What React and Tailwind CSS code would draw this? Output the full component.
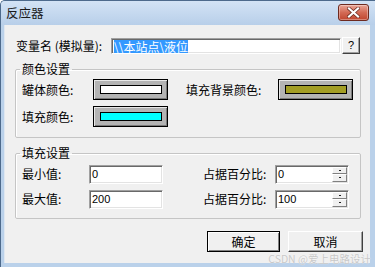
import React from "react";

function Raised({ className = "", children }) {
  return (
    <div
      className={
        "flex items-center justify-center border-t border-l border-white border-b border-r border-b-[#404040] border-r-[#404040] bg-[#f0f0f0] shadow-[inset_-1px_-1px_0_#a0a0a0] " +
        className
      }
    >
      {children}
    </div>
  );
}

function ColorBtn({ bar }) {
  return (
    <div className="w-[75px] h-[21px] border border-black bg-[#b4b4b4] shadow-[inset_1px_1px_0_#e8e8e8,inset_-1px_-1px_0_#7a7a7a] flex items-center justify-center">
      <div className={"w-[62px] h-[9px] border border-black " + bar} />
    </div>
  );
}

function Sunken({ className = "", children }) {
  return (
    <div
      className={
        "bg-white border-t border-l border-[#a0a0a0] border-b border-r border-b-white border-r-white shadow-[inset_1px_1px_0_#696969,inset_-1px_-1px_0_#e3e3e3] flex items-center " +
        className
      }
    >
      {children}
    </div>
  );
}

function Spin({ value }) {
  return (
    <Sunken className="w-[74px] h-[19px]">
      <span className="flex-1 pl-[2px] font-['Liberation_Sans',sans-serif] text-[11px] leading-none">
        {value}
      </span>
      <div className="w-[16px] h-full flex flex-col py-[1px] pr-[1px]">
        <div className="flex-1 flex items-center justify-center bg-[#f0f0f0] border-t border-l border-white border-b border-r border-b-[#808080] border-r-[#808080]">
          <div className="w-[2px] h-[1px] bg-[#202020]" />
        </div>
        <div className="flex-1 flex items-center justify-center bg-[#f0f0f0] border-t border-l border-white border-b border-r border-b-[#808080] border-r-[#808080]">
          <div className="w-[2px] h-[1px] bg-[#202020]" />
        </div>
      </div>
    </Sunken>
  );
}

export default function App() {
  return (
    <div className="relative w-[375px] h-[267px] overflow-hidden bg-[#bad1ea] flex flex-col border-l border-t border-[#4d6a8c] rounded-tl-[5px] font-['Noto_Sans_CJK_SC',sans-serif] text-[12px] text-black">
      {/* title bar */}
      <div className="h-[24px] flex items-start justify-between pl-[5px] pr-[6px] bg-gradient-to-b from-[#d3e3f5] to-[#b8cfe9]">
        <span className="mt-[5px] text-[12.5px] leading-[14px] text-[#1b1b1b]">反应器</span>
        <div className="mt-[3px] w-[31px] h-[17px] rounded-[3px] border border-[#6e2a1f] bg-gradient-to-b from-[#eaa597] via-[#d36a55] to-[#c0452e] shadow-[inset_0_0_0_1px_rgba(255,255,255,0.35)] flex items-center justify-center">
          <svg width="13" height="11" viewBox="0 0 13 11">
            <path d="M2 1.5 L11 9.5 M11 1.5 L2 9.5" stroke="#6a2a20" strokeWidth="3.6" strokeLinecap="square" />
            <path d="M2 1.5 L11 9.5 M11 1.5 L2 9.5" stroke="#ffffff" strokeWidth="2.2" strokeLinecap="square" />
          </svg>
        </div>
      </div>

      {/* frame + body */}
      <div className="flex-1 flex pl-[3px] pr-[5px] pb-[4px]">
        <div className="flex-1 bg-[#f0f0f0] flex flex-col border-l border-[#dfe7f0]">
          {/* row 1 */}
          <div className="mt-[12px] h-[17px] flex items-start pl-[11px]">
            <span className="w-[95px] leading-[17px] whitespace-nowrap">变量名 (模拟量):</span>
            <Sunken className="mt-[1px] w-[230px] h-[16px] pl-[2px]">
              <span className="bg-[#3399ff] text-white leading-[13px]">\\本站点\液位</span>
            </Sunken>
            <Raised className="ml-[1px] w-[18px] h-[17px]">
              <span className="font-['Liberation_Sans',sans-serif] text-[11px] leading-none">?</span>
            </Raised>
          </div>

          {/* group 1 */}
          <fieldset className="mt-[7px] ml-[10px] w-[346px] h-[77px] border border-[#c5c5c5] rounded-[2px] shadow-[inset_1px_1px_0_#fff] p-0 min-w-0">
            <legend className="ml-[4px] px-[2px] leading-[16px]">颜色设置</legend>
            <div className="pl-[6px] pt-[2px] flex flex-col">
              <div className="h-[21px] flex items-center">
                <span className="w-[71px] leading-[16px]">罐体颜色:</span>
                <ColorBtn bar="bg-white" />
                <span className="ml-[18px] w-[92px] leading-[16px]">填充背景颜色:</span>
                <ColorBtn bar="bg-[#a39e25]" />
              </div>
              <div className="mt-[6px] h-[21px] flex items-center">
                <span className="w-[71px] leading-[16px]">填充颜色:</span>
                <ColorBtn bar="bg-[#00ffff]" />
              </div>
            </div>
          </fieldset>

          {/* group 2 */}
          <fieldset className="mt-[7px] ml-[10px] w-[346px] h-[74px] border border-[#c5c5c5] rounded-[2px] shadow-[inset_1px_1px_0_#fff] p-0 min-w-0">
            <legend className="ml-[4px] px-[2px] leading-[16px]">填充设置</legend>
            <div className="pl-[6px] pt-[3px] flex flex-col">
              <div className="h-[20px] flex items-center">
                <span className="w-[67px] leading-[16px]">最小值:</span>
                <Sunken className="w-[74px] h-[19px]">
                  <span className="pl-[2px] font-['Liberation_Sans',sans-serif] text-[11px] leading-none">0</span>
                </Sunken>
                <span className="ml-[40px] w-[72px] leading-[16px]">占据百分比:</span>
                <Spin value="0" />
              </div>
              <div className="mt-[5px] h-[20px] flex items-center">
                <span className="w-[67px] leading-[16px]">最大值:</span>
                <Sunken className="w-[74px] h-[19px]">
                  <span className="pl-[2px] font-['Liberation_Sans',sans-serif] text-[11px] leading-none">200</span>
                </Sunken>
                <span className="ml-[40px] w-[72px] leading-[16px]">占据百分比:</span>
                <Spin value="100" />
              </div>
            </div>
          </fieldset>

          {/* buttons */}
          <div className="mt-[12px] flex justify-end pr-[7px] gap-[8px]">
            <div className="w-[73px] h-[21px] border border-black bg-[#f0f0f0] shadow-[inset_1px_1px_0_#fff,inset_-1px_-1px_0_#808080] flex items-center justify-center">
              <span className="leading-[13px]">确定</span>
            </div>
            <Raised className="w-[75px] h-[21px]">
              <span className="leading-[13px]">取消</span>
            </Raised>
          </div>
        </div>
      </div>

      {/* watermark overlay */}
      <div className="absolute right-[4px] bottom-[3px] text-[10.5px] leading-[11px] text-[#c8c8c8] [text-shadow:0_0_1px_#ffffff] whitespace-nowrap">
        CSDN @爱上电路设计
      </div>
    </div>
  );
}
